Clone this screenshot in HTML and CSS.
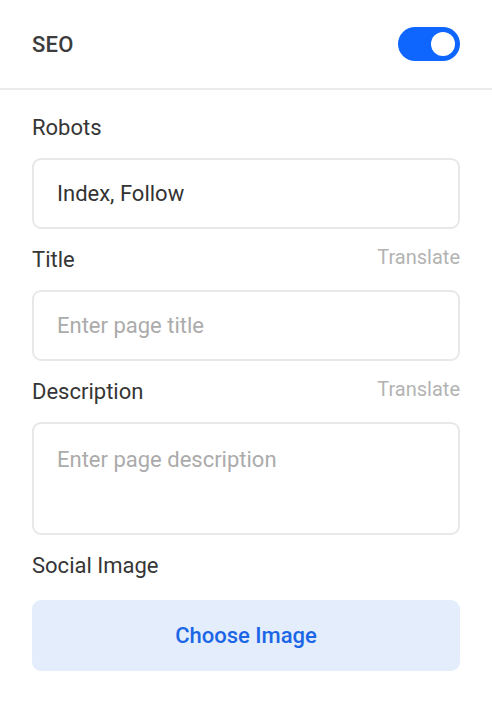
FILE: index.html
```html
<!DOCTYPE html>
<html lang="en">
<head>
<meta charset="utf-8">
<title>SEO</title>
<link rel="stylesheet" href="styles.css">
</head>
<body>
<div class="panel">
  <header class="panel-header">
    <span class="panel-title">SEO</span>
    <span class="switch" role="switch" aria-checked="true"><span class="knob"></span></span>
  </header>
  <div class="panel-body">
    <div class="field">
      <div class="field-head"><label class="field-label">Robots</label></div>
      <div class="input">Index, Follow</div>
    </div>
    <div class="field">
      <div class="field-head"><label class="field-label">Title</label><span class="translate">Translate</span></div>
      <div class="input placeholder">Enter page title</div>
    </div>
    <div class="field">
      <div class="field-head"><label class="field-label">Description</label><span class="translate">Translate</span></div>
      <div class="input textarea placeholder">Enter page description</div>
    </div>
    <div class="field">
      <div class="field-head"><label class="field-label">Social Image</label></div>
      <button class="choose-btn" type="button">Choose Image</button>
    </div>
  </div>
</div>
</body>
</html>
```
FILE: styles.css
```css
* { box-sizing: border-box; }
html, body { margin: 0; padding: 0; background: #ffffff; }
body {
  font-family: Roboto, "Liberation Sans", Arial, sans-serif;
  color: #333333;
}
.panel { width: 492px; }
.panel-header {
  height: 90px;
  padding: 0 32px;
  display: flex;
  align-items: center;
  justify-content: space-between;
  border-bottom: 2px solid #ebebeb;
}
.panel-title {
  font-size: 22px;
  font-weight: 500;
  color: #3c3c3c;
  letter-spacing: 0.2px;
}
.switch {
  width: 62px;
  height: 34px;
  border-radius: 17px;
  background: #0f66ff;
  display: flex;
  align-items: center;
  justify-content: flex-end;
  padding-right: 5px;
}
.knob {
  width: 24px;
  height: 24px;
  border-radius: 50%;
  background: #ffffff;
}
.panel-body {
  padding: 24px 32px 0;
  display: flex;
  flex-direction: column;
  gap: 17px;
}
.field { display: flex; flex-direction: column; gap: 16px; }
.field-head {
  display: flex;
  justify-content: space-between;
  align-items: flex-start;
  height: 28px;
}
.field-label {
  font-size: 22px;
  line-height: 28px;
  color: #363636;
}
.translate {
  font-size: 20px;
  line-height: 20px;
  color: #b3b3b3;
  margin-top: 1px;
}
.input {
  height: 71px;
  border: 2px solid #e8e8e8;
  border-radius: 9px;
  padding: 0 23px;
  display: flex;
  align-items: center;
  font-size: 22px;
  line-height: 28px;
  color: #333333;
}
.input.placeholder { color: #ababab; }
.input.textarea {
  height: 113px;
  align-items: flex-start;
  padding-top: 22px;
}
.choose-btn {
  margin-top: 4px;
  height: 71px;
  width: 100%;
  border: none;
  border-radius: 9px;
  background: #e3edfb;
  color: #1b66e6;
  font-family: Roboto, "Liberation Sans", Arial, sans-serif;
  font-size: 22px;
  font-weight: 500;
}
```
